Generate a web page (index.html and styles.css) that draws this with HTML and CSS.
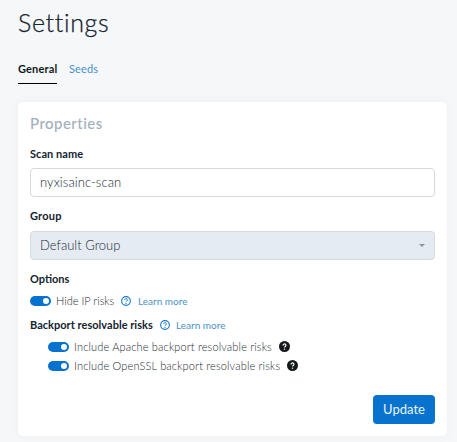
FILE: index.html
```html
<!DOCTYPE html>
<html lang="en">
<head>
<meta charset="utf-8">
<title>Settings</title>
<link rel="stylesheet" href="styles.css">
</head>
<body>
<svg class="defs" width="0" height="0" aria-hidden="true">
  <symbol id="help" viewBox="0 0 10 10">
    <circle cx="5" cy="5" r="4.35" fill="none" stroke="currentColor" stroke-width="1.1"/>
    <path d="M3.7 4a1.3 1.3 0 1 1 2 1.05Q5 5.4 5 6.05" fill="none" stroke="currentColor" stroke-width="1"/>
    <circle cx="5" cy="7.4" r=".6" fill="currentColor"/>
  </symbol>
  <symbol id="help-solid" viewBox="0 0 10 10">
    <circle cx="5" cy="5" r="5" fill="currentColor"/>
    <path d="M3.7 4a1.3 1.3 0 1 1 2 1.05Q5 5.4 5 5.95" fill="none" stroke="#fff" stroke-width="1.1"/>
    <circle cx="5" cy="7.4" r=".65" fill="#fff"/>
  </symbol>
</svg>
<main class="page">
  <h1 class="title">Settings</h1>
  <nav class="tabs">
    <a class="tab active">General</a>
    <a class="tab">Seeds</a>
  </nav>
  <section class="card">
    <h2 class="heading">Properties</h2>
    <div class="label name-label">Scan name</div>
    <div class="field"><span class="scan-value">nyxisainc-scan</span></div>
    <div class="label group-label">Group</div>
    <div class="field select"><span class="group-value">Default Group</span><i class="caret"></i></div>
    <div class="label options-label">Options</div>
    <div class="row hide-row">
      <span class="toggle"></span><span class="text hide-text">Hide IP risks</span>
      <svg class="help"><use href="#help"/></svg><a class="link">Learn more</a>
    </div>
    <div class="row backport-row">
      <span class="label backport-label">Backport resolvable risks</span>
      <svg class="help"><use href="#help"/></svg><a class="link">Learn more</a>
    </div>
    <div class="row nested">
      <span class="toggle"></span><span class="text apache-text">Include Apache backport resolvable risks</span>
      <svg class="help-solid"><use href="#help-solid"/></svg>
    </div>
    <div class="row nested">
      <span class="toggle"></span><span class="text openssl-text">Include OpenSSL backport resolvable risks</span>
      <svg class="help-solid"><use href="#help-solid"/></svg>
    </div>
    <div class="actions"><button class="button">Update</button></div>
  </section>
</main>
</body>
</html>
```

FILE: styles.css
```css
* { box-sizing: border-box; }
body {
  margin: 0;
  height: 442px;
  overflow: hidden;
  background: #f5f7f9;
  color: #14232f;
  font-family: Lato, "Liberation Sans", sans-serif;
  white-space: nowrap;
}
.defs { display: none; }
.page { padding: 4px 10px 0 18px; }
.title {
  margin: 0;
  height: 37px;
  font-size: 25px;
  line-height: 36px;
  font-weight: 300;
  letter-spacing: 0.65px;
  -webkit-text-stroke: 0.25px currentColor;
}
.tabs {
  display: flex;
  gap: 12px;
  height: 43px;
  padding-top: 18px;
}
.tab {
  height: 25px;
  font-size: 11px;
  line-height: 19px;
  color: #4a91cb;
  letter-spacing: 0.15px;
}
.tab.active {
  width: 39px;
  font-weight: 700;
  color: #111a20;
  border-bottom: 1px solid #000;
}
.card {
  height: 334px;
  margin-top: 18px;
  padding: 10px 12px 12px;
  display: flex;
  flex-direction: column;
  background: #fff;
  border-radius: 5px;
  box-shadow: 0 0 12px rgba(30, 45, 60, 0.035);
}
.heading {
  margin: 0;
  height: 22px;
  font-size: 15px;
  line-height: 22px;
  font-weight: 500;
  letter-spacing: 0.45px;
  color: #a2afbc;
}
.label {
  height: 16px;
  font-size: 11px;
  line-height: 16px;
  font-weight: 700;
}
.name-label { margin-top: 12px; letter-spacing: 0.05px; }
.group-label, .options-label { margin-top: 11px; }
.group-label { letter-spacing: 0.2px; }
.field {
  display: flex;
  align-items: center;
  justify-content: space-between;
  height: 29px;
  margin-top: 6px;
  padding: 0 9px;
  border: 1px solid #d5dade;
  border-radius: 4px;
  font-size: 13px;
  line-height: 17px;
  font-weight: 300;
  color: #1d2933;
}
.scan-value { letter-spacing: 0.07px; }
.group-value { letter-spacing: 0; }
.scan-value, .group-value { padding-bottom: 1px; }
.group-label + .field { margin-top: 7px; }
.select { background: #e5ebf2; }
.caret {
  border: 3px solid transparent;
  border-top-color: #8c949c;
  border-bottom: 0;
}
.row {
  display: flex;
  align-items: center;
  height: 20px;
}
.hide-row { margin-top: 4px; }
.backport-row { margin-top: 4px; }
.nested { padding-left: 18px; height: 19px; }
.backport-row + .nested { margin-top: 2px; }
.toggle {
  width: 21px;
  height: 10px;
  margin-right: 5px;
  padding: 2px;
  display: flex;
  justify-content: flex-end;
  border-radius: 5px;
  background: #0873cf;
}
.toggle::after {
  content: "";
  width: 6px;
  height: 6px;
  border-radius: 50%;
  background: #fff;
}
.text {
  height: 14px;
  font-size: 11px;
  line-height: 13px;
  font-weight: 300;
  letter-spacing: 0.16px;
  color: #1d2933;
}
.hide-text { width: 58px; letter-spacing: 0; }
.apache-text { width: 198px; }
.openssl-text { width: 206px; }
.backport-label { width: 123px; letter-spacing: 0.02px; }
.help { width: 10px; height: 10px; margin: 0 7px 0 7px; color: #1478cb; }
.backport-row .help { margin-right: 6px; }
.help-solid { width: 11px; height: 11px; margin: 0 0 1px 7px; color: #14191c; }
.link { font-size: 10px; color: #4a91c5; }
.actions {
  display: flex;
  justify-content: flex-end;
  margin-top: auto;
}
.button {
  width: 62px;
  height: 29px;
  padding: 0;
  border: 0;
  border-radius: 4px;
  background: #0873cf;
  color: #e8f4ff;
  font: 400 13px/29px Lato, "Liberation Sans", sans-serif;
}
```
